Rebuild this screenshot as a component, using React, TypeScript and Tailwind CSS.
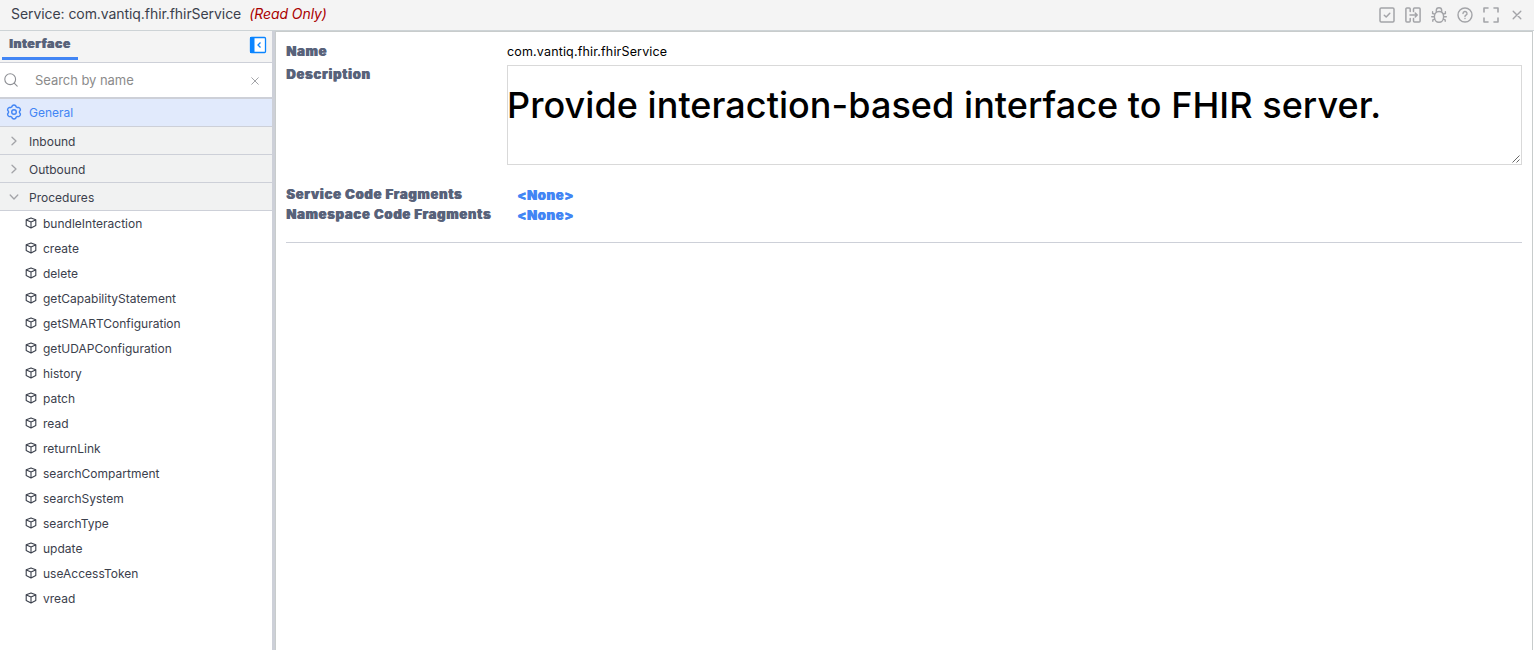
import React from "react";

const procedures = [
  "bundleInteraction", "create", "delete", "getCapabilityStatement", "getSMARTConfiguration",
  "getUDAPConfiguration", "history", "patch", "read", "returnLink", "searchCompartment",
  "searchSystem", "searchType", "update", "useAccessToken", "vread",
];

type IconProps = { className?: string; size?: number; width?: number; box?: number; children: React.ReactNode };

function Icon({ className = "", size = 16, width = 1.3, box = 16, children }: IconProps) {
  return (
    <svg className={`shrink-0 ${className}`} width={size} height={size} viewBox={`0 0 ${box} ${box}`} fill="none" stroke="currentColor" strokeWidth={width} strokeLinecap="round" strokeLinejoin="round">
      {children}
    </svg>
  );
}

function Toolbar() {
  return (
    <div className="flex items-center gap-[10px] pr-[9px] pb-px text-[#a3a4a8]">
      <Icon width={1.5}><rect x="1" y="1" width="14" height="14" rx="1.2" /><path d="M5.3 8.2 7.2 10l3.6-3.800" /></Icon>
      <Icon width={1.5}>
        <path d="M5.200 4.500V2a1 1 0 0 0-1-1H1.900a1 1 0 0 0-1 1v12a1 1 0 0 0 1 1h2.300a1 1 0 0 0 1-1v-2.500" />
        <path d="M8.500 4.500V2a1 1 0 0 1 1-1h4.600a1 1 0 0 1 1 1v12a1 1 0 0 1-1 1H9.500a1 1 0 0 1-1-1v-2.500M5 8h7M10.200 6l2 2-2 2" />
      </Icon>
      <Icon width={1.4}>
        <path d="M8 4.500c-2.800 0-4.600 2-4.600 5.200S5.300 15.300 8 15.300s4.600-2.400 4.600-5.600S10.800 4.500 8 4.500zM5.300 5V3.500a2.700 2.700 0 0 1 5.400 0V5M3.800 7.200 1.600 6.500V4.800M12.200 7.200l2.200-.7V4.800M3.300 9.700H.7M12.700 9.700h2.600M4 12l-2.200.8v1.500M12 12l2.200.8v1.500" />
      </Icon>
      <Icon width={1.4}><circle cx="8" cy="8" r="7" /><path d="M6 6.500a2 2 0 1 1 3 1.700c-.7.4-1 .7-1 1.300M8 11.500v.1" /></Icon>
      <Icon width={1.6}><path d="M1 5V1h4M11 1h4v4M15 11v4h-4M5 15H1v-4" /></Icon>
      <Icon width={1.4}><path d="m4.200 4.200 7.600 7.600M11.800 4.200l-7.600 7.600" /></Icon>
    </div>
  );
}

function Section({ label, open = false }: { label: string; open?: boolean }) {
  return (
    <div className="flex h-7 items-center border-b border-[#cdd0d8] bg-[#f1f2f2] pl-[9px] text-[#3b404c]">
      <Icon size={10} box={10} width={1.3} className="mr-[10px] text-[#a3a4a8]">
        <path d={open ? "M1.200 3 5 7l3.800-4" : "m3 1.200 4 3.800-4 3.800"} />
      </Icon>
      <span className="pt-[2px] leading-4">{label}</span>
    </div>
  );
}

function Sidebar() {
  return (
    <aside className="flex w-[272px] shrink-0 flex-col text-[12px] tracking-[0.01px]">
      <div className="flex h-8 items-start justify-between border-b border-[#cdd0d8] bg-[#f4f4f4] pl-[2px] pr-[5px]">
        <div className="h-[29px] w-[76px] border-b-3 border-[#4285f4] pl-[7px] pt-[5px] text-[12px] leading-4 font-black tracking-[0.720px] text-[#58627a] [text-shadow:0.7px_0_0_#58627a]">Interface</div>
        <svg className="mt-[5px]" width="18" height="18" viewBox="0 0 18 18" fill="none">
          <rect x="1.500" y="1.500" width="15" height="15" rx="1" fill="#fff" stroke="#0a84ff" strokeWidth="1.300" />
          <path d="M1 1h4.500v16H1z" fill="#0a84ff" />
          <path d="m11.500 6.500-2.500 2.500 2.500 2.500" stroke="#0a84ff" strokeWidth="1.300" />
        </svg>
      </div>
      <div className="flex h-9 items-center border-b-2 border-[#cdd0d8] bg-white pl-[4px] pr-[12px]">
        <Icon size={14} box={14} width={1.1} className="text-[#8d8f94]"><circle cx="6.200" cy="6.200" r="5.400" /><path d="m10.200 10.200 3 3" /></Icon>
        <span className="ml-[17px] grow text-[13px] leading-4 tracking-[-0.050px] text-[#8b8b8b]">Search by name</span>
        <Icon size={10} box={10} width={1} className="mt-px text-[#a3a4a8]"><path d="m1.700 1.700 6.600 6.600M8.300 1.700l-6.600 6.600" /></Icon>
      </div>
      <div className="flex h-7 items-center border-b border-[#cdd0d8] bg-[#e1eafc] pl-[6px] text-[#4285f4]">
        <Icon size={16} box={16} width={1.400} className="-mt-px mr-[7px]">
          <path d="M6.400 1.600Q8 .3 9.600 1.600l.6 1.300 1 .6 1.500-.1q1.900.7 1.700 2.700L13.500 7.300v1.400l.9 1.200q.2 2-1.700 2.700l-1.500-.1-1 .6-.6 1.300Q8 15.700 6.400 14.400l-.6-1.300-1-.6-1.500.1Q1.400 11.900 1.600 9.900L2.500 8.700V7.300L1.600 6.100Q1.400 4.100 3.300 3.400l1.500.1 1-.6z" />
          <circle cx="8" cy="8" r="2.300" />
        </Icon>
        <span className="leading-4">General</span>
      </div>
      <Section label="Inbound" />
      <Section label="Outbound" />
      <Section label="Procedures" open />
      <ul>
        {procedures.map((name) => (
          <li key={name} className="flex h-[25px] items-center pl-[25px] text-[#3b404c]">
            <Icon size={12} box={12} width={1.100} className="-mt-[2px] mr-[6px]">
              <path d="M6 .9 10.800 2.800v5.800L6 11 1.200 8.600V2.800zM1.400 3.100 6 5.100l4.600-2M6 5.100v5.700" />
            </Icon>
            <span className="leading-4">{name}</span>
          </li>
        ))}
      </ul>
    </aside>
  );
}

const label = "leading-[18px] tracking-[0.750px] font-black text-[#58627a] [text-shadow:0.7px_0_0_#58627a]";
const link = "h-5 pl-[10px] font-black tracking-[0.700px] text-[#4285f4] [text-shadow:0.7px_0_0_#4285f4]";

export default function App() {
  return (
    <div className="flex h-[650px] w-[1534px] flex-col overflow-hidden bg-white font-['Inter',sans-serif]">
      <header className="flex h-[31px] shrink-0 items-center justify-between border-b border-[#cdd3d6] bg-[#f4f4f4] pl-[11px]">
        <h1 className="pb-[2px] text-[14px] leading-5 tracking-[-0.070px] text-[#3b404c]">
          Service: com.vantiq.fhir.fhirService
          <em className="ml-[8px] text-[#aa0000]">(Read Only)</em>
        </h1>
        <Toolbar />
      </header>
      <div className="flex min-h-0 grow">
        <Sidebar />
        <div className="w-[3px] shrink-0 bg-[#cdd0d8]" />
        <main className="mr-px grow border-x border-t border-[#c8cccc] pl-[10px] pr-[10px] pt-[10px]">
          <div className="grid grid-cols-[221px_1fr] border-b border-[#cdd0d8] pb-[17px] text-[13px] leading-5">
            <div className={`h-[23px] ${label}`}>Name</div>
            <div className="h-[23px] text-[12.500px] tracking-[0.160px] text-black">com.vantiq.fhir.fhirService</div>
            <div className={label}>Description</div>
            <div className="relative h-[100px] border border-[#d9d9d9] text-[36px] leading-[79px] font-medium text-black">
              <p className="-ml-px tracking-[0.050px]">Provide interaction-based interface to FHIR server.</p>
              <svg className="absolute right-[1px] bottom-[1px]" width="8" height="8" viewBox="0 0 8 8" stroke="#555" strokeWidth="0.900"><path d="M.5 7.500l7-7M4.500 7.500l3-3" /></svg>
            </div>
            <div className={`mt-5 h-5 ${label}`}>Service Code Fragments</div>
            <div className={`mt-5 ${link}`}>&lt;None&gt;</div>
            <div className={`h-5 ${label}`}>Namespace Code Fragments</div>
            <div className={link}>&lt;None&gt;</div>
          </div>
        </main>
      </div>
    </div>
  );
}
